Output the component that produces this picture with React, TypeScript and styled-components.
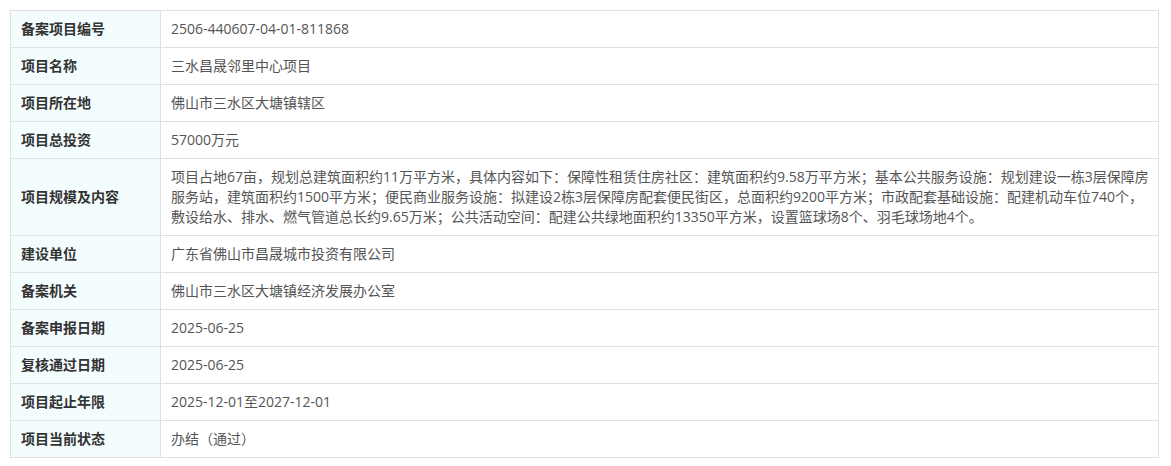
import React from 'react'
import styled, { createGlobalStyle } from 'styled-components'

const GlobalStyle = createGlobalStyle`
  body {
    margin: 0;
    background: #fff;
    font-family: "Open Sans", "Noto Sans CJK SC", sans-serif;
  }
`

// each entry is one row; a value given as an array is shown line by line
const rows: [string, string | string[]][] = [
  ['备案项目编号', '2506-440607-04-01-811868'],
  ['项目名称', '三水昌晟邻里中心项目'],
  ['项目所在地', '佛山市三水区大塘镇辖区'],
  ['项目总投资', '57000万元'],
  [
    '项目规模及内容',
    [
      '项目占地67亩，规划总建筑面积约11万平方米，具体内容如下：保障性租赁住房社区：建筑面积约9.58万平方米；基本公共服务设施：规划建设一栋3层保障房',
      '服务站，建筑面积约1500平方米；便民商业服务设施：拟建设2栋3层保障房配套便民街区，总面积约9200平方米；市政配套基础设施：配建机动车位740个，',
      '敷设给水、排水、燃气管道总长约9.65万米；公共活动空间：配建公共绿地面积约13350平方米，设置篮球场8个、羽毛球场地4个。',
    ],
  ],
  ['建设单位', '广东省佛山市昌晟城市投资有限公司'],
  ['备案机关', '佛山市三水区大塘镇经济发展办公室'],
  ['备案申报日期', '2025-06-25'],
  ['复核通过日期', '2025-06-25'],
  ['项目起止年限', '2025-12-01至2027-12-01'],
  ['项目当前状态', '办结（通过）'],
]

const App: React.FC = () => {
  return (
    <>
      <GlobalStyle />
      <StyledPage>
        <StyledTable>
          <tbody>
            {rows.map(([label, value]) => (
              <tr key={label}>
                <StyledLabel>{label}</StyledLabel>
                <StyledValue>
                  {Array.isArray(value)
                    ? value.map((line, i) => <StyledLine key={i}>{line}</StyledLine>)
                    : value}
                </StyledValue>
              </tr>
            ))}
          </tbody>
        </StyledTable>
      </StyledPage>
    </>
  )
}

const StyledPage = styled.div`
  padding: 10px;
`

const StyledTable = styled.table`
  width: 1149px;
  border-collapse: collapse;
  table-layout: fixed;
  font-size: 14px;
  line-height: 20px;
`

const StyledLabel = styled.th`
  width: 129px;
  padding: 8px 10px;
  text-align: left;
  vertical-align: middle;
  font-weight: 700;
  color: #333;
  background: #f4fdfd;
  border: 1px solid #e0e0e0;
`

const StyledValue = styled.td`
  padding: 8px 10px;
  text-align: left;
  vertical-align: middle;
  color: #555;
  border: 1px solid #e0e0e0;
`

const StyledLine = styled.div`
  white-space: nowrap;
`

export default App
